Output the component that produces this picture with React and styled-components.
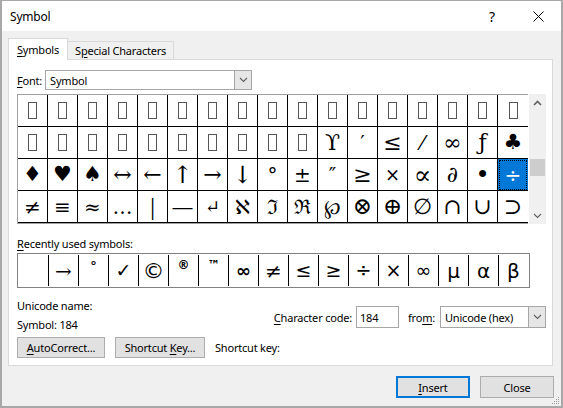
import styled, { createGlobalStyle } from "styled-components";

const Global = createGlobalStyle`
  html, body { margin: 0; padding: 0; background: #f0f0f0; }
  * { box-sizing: border-box; }
`;

const UI = `"Noto Sans", "Liberation Sans", sans-serif`;

const Window = styled.div`
  position: relative;
  width: 563px;
  height: 408px;
  background: #f0f0f0;
  border: 2px solid #a8a8a8;
  border-top-width: 1px;
  font-family: ${UI};
  font-size: 11px;
  letter-spacing: -0.2px;
  color: #000;
  display: flex;
  flex-direction: column;
`;

const TitleBar = styled.div`
  height: 30px;
  background: #fff;
  display: flex;
  align-items: center;
  padding-left: 8px;
`;

const Title = styled.div`
  flex: 1;
  font-size: 12px;
`;

const TitleButton = styled.div`
  width: 46px;
  height: 30px;
  display: flex;
  align-items: center;
  justify-content: center;
  font-size: 14px;
`;

const Body = styled.div`
  flex: 1;
  display: flex;
  flex-direction: column;
  padding: 7px 8px 0 6px;
`;

const Tabs = styled.div`
  height: 21px;
  display: flex;
  align-items: flex-end;
`;

const Tab = styled.div`
  height: ${(p) => (p.active ? "22px" : "18px")};
  margin-bottom: ${(p) => (p.active ? "-1px" : "0")};
  position: relative;
  z-index: ${(p) => (p.active ? 1 : 0)};
  background: ${(p) => (p.active ? "#fff" : "#f0f0f0")};
  border: 1px solid #d9d9d9;
  border-bottom: none;
  border-left-width: ${(p) => (p.active ? "1px" : "0")};
  padding: 0 ${(p) => (p.active ? "8px" : "7px")};
  display: flex;
  align-items: center;
  white-space: nowrap;
`;

const U = styled.span`
  text-decoration: underline;
  text-underline-offset: 2px;
`;

const Panel = styled.div`
  height: 307px;
  background: #fff;
  border: 1px solid #d9d9d9;
  padding: 10px 6px 7px 8px;
  display: flex;
  flex-direction: column;
`;

const FontRow = styled.div`
  height: 20px;
  display: flex;
  align-items: center;
  gap: 3px;
`;

const Select = styled.div`
  width: ${(p) => p.width}px;
  height: ${(p) => p.height || 20}px;
  margin-left: ${(p) => p.gap || 0}px;
  border: 1px solid #a6a6a6;
  background: #fff;
  display: flex;
  align-items: stretch;
`;

const SelectText = styled.div`
  flex: 1;
  display: flex;
  align-items: center;
  padding-left: 4px;
`;

const DropButton = styled.div`
  width: 17px;
  background: #e6e6e6;
  border-left: 1px solid #a6a6a6;
  display: flex;
  align-items: center;
  justify-content: center;
`;

const GridWrap = styled.div`
  margin-top: 4px;
  display: flex;
`;

const Grid = styled.div`
  display: grid;
  grid-template-columns: repeat(17, 30px);
  grid-auto-rows: 32px;
  border: 1px solid #a0a0a0;
  border-right: none;
`;

const Cell = styled.div`
  border-right: ${(p) => (p.last ? "none" : "1px solid #000")};
  border-bottom: 1px solid #000;
  display: flex;
  align-items: center;
  justify-content: center;
  font-family: ${(p) => p.family};
  font-size: ${(p) => p.size || 20}px;
  line-height: 1;
  letter-spacing: 0;
  color: ${(p) => (p.selected ? "#fff" : "#000")};
  background: ${(p) => (p.selected ? "#0078d7" : "#fff")};
  outline: ${(p) => (p.selected ? "1px dotted #000" : "none")};
  outline-offset: -2px;
`;

const Missing = styled.span`
  display: inline-block;
  width: 9px;
  height: 17px;
  border: 1px solid #555;
`;

const Scrollbar = styled.div`
  width: 17px;
  background: #f0f0f0;
  display: flex;
  flex-direction: column;
  margin-left: 1px;
`;

const ScrollArrow = styled.div`
  height: 17px;
  display: flex;
  align-items: center;
  justify-content: center;
`;

const Track = styled.div`
  flex: 1;
  padding-top: 48px;
`;

const Thumb = styled.div`
  height: 17px;
  background: #cdcdcd;
  margin: 0 1px;
`;

const Label = styled.div`
  margin-top: ${(p) => p.top || 0}px;
  line-height: 16px;
`;

const Recent = styled.div`
  margin-top: 1px;
  width: 513px;
  height: 35px;
  border: 1px solid #828282;
  display: flex;
`;

const RecentCell = styled.div`
  width: 30px;
  margin: 1px 0;
  border-left: ${(p) => (p.first ? "none" : "1px solid #000")};
  display: flex;
  align-items: ${(p) => (p.raised ? "flex-start" : "center")};
  padding-top: ${(p) => (p.raised ? "4px" : "0")};
  justify-content: center;
  font-family: ${(p) => (p.serif ? `"DejaVu Serif", serif` : `"DejaVu Sans", sans-serif`)};
  font-size: ${(p) => p.size || 18}px;
  font-weight: ${(p) => (p.bold ? 700 : 400)};
  letter-spacing: 0;
  line-height: 1;
`;

const InfoRow = styled.div`
  margin-top: 8px;
  height: 38px;
  display: flex;
`;

const InfoLeft = styled.div`
  flex: 1;
  display: flex;
  flex-direction: column;
`;

const InfoLine = styled.div`
  height: 19px;
  display: flex;
  align-items: center;
`;

const CodeGroup = styled.div`
  display: flex;
  align-items: center;
  padding-top: 4px;
`;

const Input = styled.div`
  width: 43px;
  height: 22px;
  border: 1px solid #a6a6a6;
  margin: 0 9px 0 4px;
  padding-left: 3px;
  display: flex;
  align-items: center;
`;

const ButtonRow = styled.div`
  margin-top: 3px;
  display: flex;
  align-items: center;
  gap: 10px;
`;

const Button = styled.div`
  width: ${(p) => p.width}px;
  height: ${(p) => p.height || 21}px;
  background: #e1e1e1;
  border: ${(p) => (p.primary ? "2px solid #0078d7" : "1px solid #adadad")};
  display: flex;
  align-items: center;
  justify-content: center;
`;

const Footer = styled.div`
  margin-top: 10px;
  margin-right: -1px;
  display: flex;
  justify-content: flex-end;
  gap: 10px;
`;

const Grip = styled.svg`
  position: absolute;
  right: 1px;
  bottom: 1px;
`;

const Chevron = ({ up, color = "#606060" }) => (
  <svg width="9" height="6" viewBox="0 0 9 6">
    <path
      d={up ? "M1 5 L4.5 1.5 L8 5" : "M1 1 L4.5 4.5 L8 1"}
      fill="none"
      stroke={color}
      strokeWidth={up ? 1.6 : 1.1}
    />
  </svg>
);

const SERIF = `"DejaVu Serif", "Liberation Serif", serif`;
const SANS = `"DejaVu Sans", sans-serif`;
const TIMES = `"Liberation Serif", "DejaVu Serif", serif`;

const M = "box";
const rows = [
  Array(17).fill(M),
  [...Array(10).fill(M), "ϒ", "′", "≤", "⁄", "∞", "ƒ", "♣"],
  ["♦", "♥", "♠", "↔", "←", "↑", "→", "↓", "°", "±", "″", "≥", "×", "∝", "∂", "•", "÷"],
  ["≠", "≡", "≈", "…", "|", "―", "↵", "ℵ", "ℑ", "ℜ", "℘", "⊗", "⊕", "∅", "∩", "∪", "⊃"],
];

const sizes = {
  "♦": 21, "♥": 21, "♠": 21, "♣": 21, "•": 24, "|": 26, "↵": 18,
  "↔": 22, "←": 22, "→": 22, "↑": 24, "↓": 24, "≤": 22, "≥": 22, "∞": 22, "∝": 26,
  "⊗": 23, "⊕": 23, "∅": 22, "∩": 22, "∪": 22, "⊃": 22, "ƒ": 22, "∂": 22, "ϒ": 22,
  "ℵ": 20, "×": 18,
};
const families = {
  "♦": SANS, "♥": SANS, "♠": SANS, "♣": SANS, "ℵ": SANS, "|": TIMES,
};

const recent = [
  { c: "" },
  { c: "→", serif: true, size: 20 },
  { c: "°", bold: true, size: 13, raised: true },
  { c: "✓", bold: true, size: 19 },
  { c: "©", size: 22 },
  { c: "®", bold: true, size: 12, raised: true },
  { c: "™", bold: true, size: 12, raised: true },
  { c: "∞", bold: true, size: 18 },
  { c: "≠", size: 20 },
  { c: "≤", size: 19 },
  { c: "≥", size: 19 },
  { c: "÷", size: 19 },
  { c: "×", size: 19 },
  { c: "∞", size: 19 },
  { c: "µ", size: 20 },
  { c: "α", size: 20 },
  { c: "β", size: 20 },
];

export default function App() {
  return (
    <>
      <Global />
      <Window>
        <TitleBar>
          <Title>Symbol</Title>
          <TitleButton>?</TitleButton>
          <TitleButton>
            <svg width="11" height="11" viewBox="0 0 11 11">
              <path d="M0.5 0.5 L10.5 10.5 M10.5 0.5 L0.5 10.5" stroke="#000" strokeWidth="1" />
            </svg>
          </TitleButton>
        </TitleBar>
        <Body>
          <Tabs>
            <Tab active>
              <span><U>S</U>ymbols</span>
            </Tab>
            <Tab>
              <span>S<U>p</U>ecial Characters</span>
            </Tab>
          </Tabs>
          <Panel>
            <FontRow>
              <span><U>F</U>ont:</span>
              <Select width={207}>
                <SelectText>Symbol</SelectText>
                <DropButton>
                  <Chevron />
                </DropButton>
              </Select>
            </FontRow>
            <GridWrap>
              <Grid>
                {rows.map((row, r) =>
                  row.map((c, i) => (
                    <Cell
                      key={`${r}-${i}`}
                      last={i === 16}
                      selected={r === 2 && i === 16}
                      size={sizes[c]}
                      family={families[c] || SERIF}
                    >
                      {c === M ? <Missing /> : c}
                    </Cell>
                  ))
                )}
              </Grid>
              <Scrollbar>
                <ScrollArrow>
                  <Chevron up />
                </ScrollArrow>
                <Track>
                  <Thumb />
                </Track>
                <ScrollArrow>
                  <Chevron up={false} color="#606060" />
                </ScrollArrow>
              </Scrollbar>
            </GridWrap>
            <Label top={12}>
              <U>R</U>ecently used symbols:
            </Label>
            <Recent>
              {recent.map((s, i) => (
                <RecentCell
                  key={i}
                  first={i === 0}
                  serif={s.serif}
                  bold={s.bold}
                  size={s.size}
                  raised={s.raised}
                >
                  {s.c}
                </RecentCell>
              ))}
            </Recent>
            <InfoRow>
              <InfoLeft>
                <InfoLine>Unicode name:</InfoLine>
                <InfoLine>Symbol: 184</InfoLine>
              </InfoLeft>
              <CodeGroup>
                <span><U>C</U>haracter code:</span>
                <Input>184</Input>
                <span>fro<U>m</U>:</span>
                <Select width={106} height={22} gap={5}>
                  <SelectText>Unicode (hex)</SelectText>
                  <DropButton>
                    <Chevron />
                  </DropButton>
                </Select>
              </CodeGroup>
            </InfoRow>
            <ButtonRow>
              <Button width={88}>
                <span><U>A</U>utoCorrect...</span>
              </Button>
              <Button width={90}>
                <span>Shortcut <U>K</U>ey...</span>
              </Button>
              <span>Shortcut key:</span>
            </ButtonRow>
          </Panel>
          <Footer>
            <Button primary width={74} height={22}>
              <span><U>I</U>nsert</span>
            </Button>
            <Button width={74} height={22}>
              Close
            </Button>
          </Footer>
        </Body>
        <Grip width="10" height="10" viewBox="0 0 10 10">
          <g fill="#9a9a9a">
            <rect x="8" y="2" width="1" height="1" />
            <rect x="6" y="4" width="1" height="1" />
            <rect x="8" y="4" width="1" height="1" />
            <rect x="4" y="6" width="1" height="1" />
            <rect x="6" y="6" width="1" height="1" />
            <rect x="8" y="6" width="1" height="1" />
            <rect x="2" y="8" width="1" height="1" />
            <rect x="4" y="8" width="1" height="1" />
            <rect x="6" y="8" width="1" height="1" />
            <rect x="8" y="8" width="1" height="1" />
          </g>
        </Grip>
      </Window>
    </>
  );
}
